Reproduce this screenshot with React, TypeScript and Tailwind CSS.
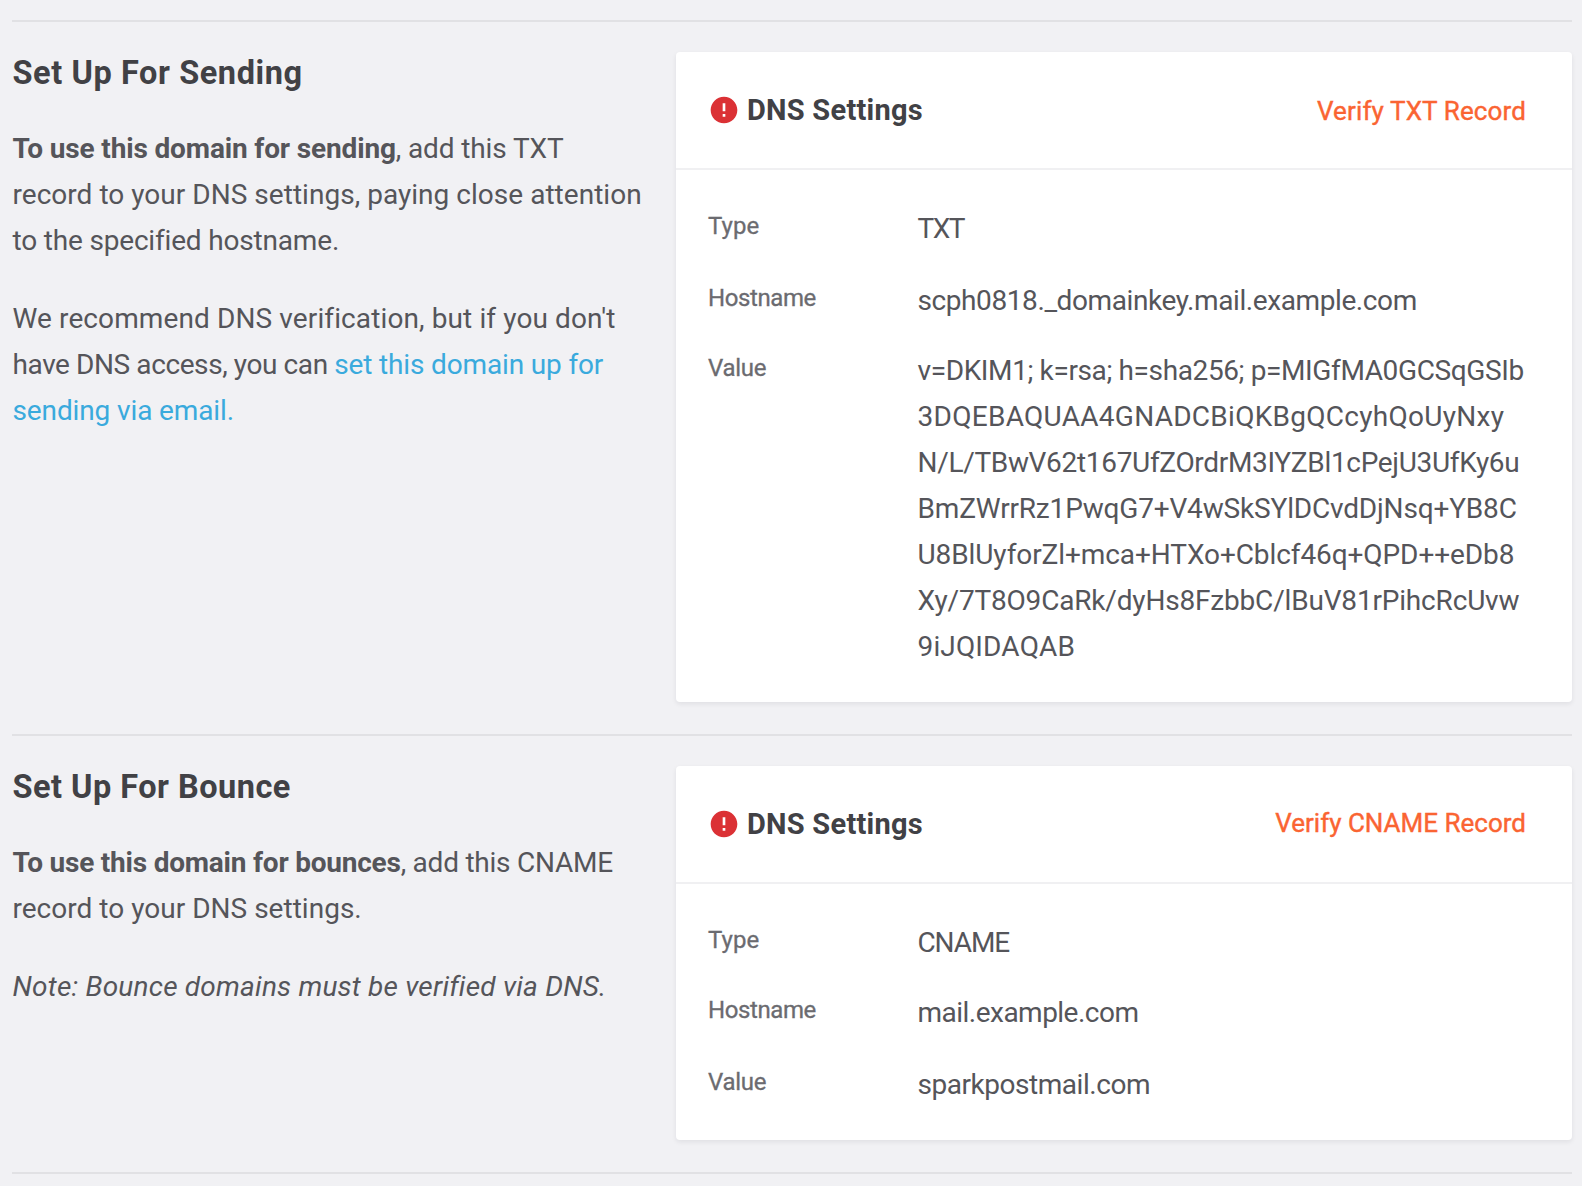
import { MdError } from "react-icons/md";

type Line = { text: string; tracking: string };

type Row = { label: string; labelTracking: string; className: string; lines: Line[] };

function Value({ lines }: { lines: Line[] }) {
  return (
    <dd className="text-[28px] leading-[46px] text-[#55555a]">
      {lines.map((line) => (
        <span key={line.text} className={`block whitespace-nowrap ${line.tracking}`}>
          {line.text}
        </span>
      ))}
    </dd>
  );
}

function Card({ action, actionClass, rows }: { action: string; actionClass: string; rows: Row[] }) {
  return (
    <div className="w-[896px] shrink-0 rounded bg-white shadow-[0_2px_5px_rgba(20,20,40,0.08)]">
      <header className="flex h-[118px] items-center border-b-2 border-[#f0f0f2] pr-[46px] pl-8">
        <MdError className="size-8 text-[#db3135]" />
        <h3 className="ml-[7px] text-[29px] leading-9 font-bold tracking-[0.25px] text-[#414145]">
          DNS Settings
        </h3>
        <a
          className={`ml-auto text-[26px] leading-8 text-[#fa6432] [-webkit-text-stroke:0.4px] ${actionClass}`}
          href="#verify"
        >
          {action}
        </a>
      </header>
      <dl className="pt-9 pb-8 pl-8">
        {rows.map((row) => (
          <div key={row.label} className={`grid grid-cols-[209.5px_1fr] ${row.className}`}>
            <dt
              className={`mt-[6px] text-[24px] leading-7 text-[#6b6b70] [-webkit-text-stroke:0.3px] ${row.labelTracking}`}
            >
              {row.label}
            </dt>
            <Value lines={row.lines} />
          </div>
        ))}
      </dl>
    </div>
  );
}

const sendingRows: Row[] = [
  {
    label: "Type",
    labelTracking: "tracking-[0.1px]",
    className: "",
    lines: [{ text: "TXT", tracking: "tracking-[-1.5px]" }],
  },
  {
    label: "Hostname",
    labelTracking: "tracking-[-0.4px]",
    className: "mt-[26px]",
    lines: [{ text: "scph0818._domainkey.mail.example.com", tracking: "tracking-[-0.41px]" }],
  },
  {
    label: "Value",
    labelTracking: "tracking-[-0.27px]",
    className: "mt-6",
    lines: [
      { text: "v=DKIM1; k=rsa; h=sha256; p=MIGfMA0GCSqGSIb", tracking: "tracking-[-0.38px]" },
      { text: "3DQEBAQUAA4GNADCBiQKBgQCcyhQoUyNxy", tracking: "tracking-[0.28px]" },
      { text: "N/L/TBwV62t167UfZOrdrM3IYZBl1cPejU3UfKy6u", tracking: "tracking-[-0.32px]" },
      { text: "BmZWrrRz1PwqG7+V4wSkSYlDCvdDjNsq+YB8C", tracking: "tracking-[-0.17px]" },
      { text: "U8BlUyforZl+mca+HTXo+Cblcf46q+QPD++eDb8", tracking: "tracking-[-0.09px]" },
      { text: "Xy/7T8O9CaRk/dyHs8FzbbC/lBuV81rPihcRcUvw", tracking: "tracking-[-0.18px]" },
      { text: "9iJQIDAQAB", tracking: "tracking-[0.15px]" },
    ],
  },
];

const bounceRows: Row[] = [
  {
    label: "Type",
    labelTracking: "tracking-[0.1px]",
    className: "",
    lines: [{ text: "CNAME", tracking: "tracking-[-1.11px]" }],
  },
  {
    label: "Hostname",
    labelTracking: "tracking-[-0.4px]",
    className: "mt-6",
    lines: [{ text: "mail.example.com", tracking: "tracking-[-0.52px]" }],
  },
  {
    label: "Value",
    labelTracking: "tracking-[-0.27px]",
    className: "mt-[26px]",
    lines: [{ text: "sparkpostmail.com", tracking: "tracking-[-0.46px]" }],
  },
];

export default function App() {
  return (
    <main className="h-[1186px] w-[1582px] overflow-hidden bg-[#f1f1f4] pt-5 pr-[10px] pl-3 font-[Roboto,sans-serif]">
      <section className="flex border-t-2 border-[#e1e1e4] pt-[30px] pb-8">
        <div className="w-[664px] shrink-0 pl-[0.5px] text-[28px] leading-[46px] whitespace-nowrap text-[#55555a]">
          <h2 className="mt-px text-[32.5px] leading-10 font-bold tracking-[0.58px] text-[#414145]">
            Set Up For Sending
          </h2>
          <p className="mt-[33px]">
            <strong className="font-bold tracking-[-0.15px]">To use this domain for sending</strong>
            <span className="tracking-[-0.12px]">, add this TXT</span>
            <span className="block tracking-[0.03px]">record to your DNS settings, paying close attention</span>
            <span className="block tracking-[-0.18px]">to the specified hostname.</span>
          </p>
          <p className="mt-8">
            <span className="block tracking-[0.11px]">We recommend DNS verification, but if you don't</span>
            <span className="tracking-[-0.41px]">have DNS access, you can </span>
            <a className="text-[#3aaadd]" href="#email">
              <span className="tracking-[-0.15px]">set this domain up for</span>
              <span className="block tracking-[-0.12px]">sending via email.</span>
            </a>
          </p>
        </div>
        <Card action="Verify TXT Record" actionClass="mt-[2px] tracking-[0.12px]" rows={sendingRows} />
      </section>
      <section className="flex border-y-2 border-[#e1e1e4] pt-[30px] pb-8">
        <div className="w-[664px] shrink-0 pl-[0.5px] text-[28px] leading-[46px] whitespace-nowrap text-[#55555a]">
          <h2 className="mt-px text-[32.5px] leading-10 font-bold tracking-[0.48px] text-[#414145]">
            Set Up For Bounce
          </h2>
          <p className="mt-[33px]">
            <strong className="font-bold tracking-[-0.22px]">To use this domain for bounces</strong>
            <span className="tracking-[-0.24px]">, add this CNAME</span>
            <span className="block tracking-[0.02px]">record to your DNS settings.</span>
          </p>
          <p className="mt-8 tracking-[0.21px] italic">Note: Bounce domains must be verified via DNS.</p>
        </div>
        <Card action="Verify CNAME Record" actionClass="-mt-[2px] tracking-[0px]" rows={bounceRows} />
      </section>
    </main>
  );
}
